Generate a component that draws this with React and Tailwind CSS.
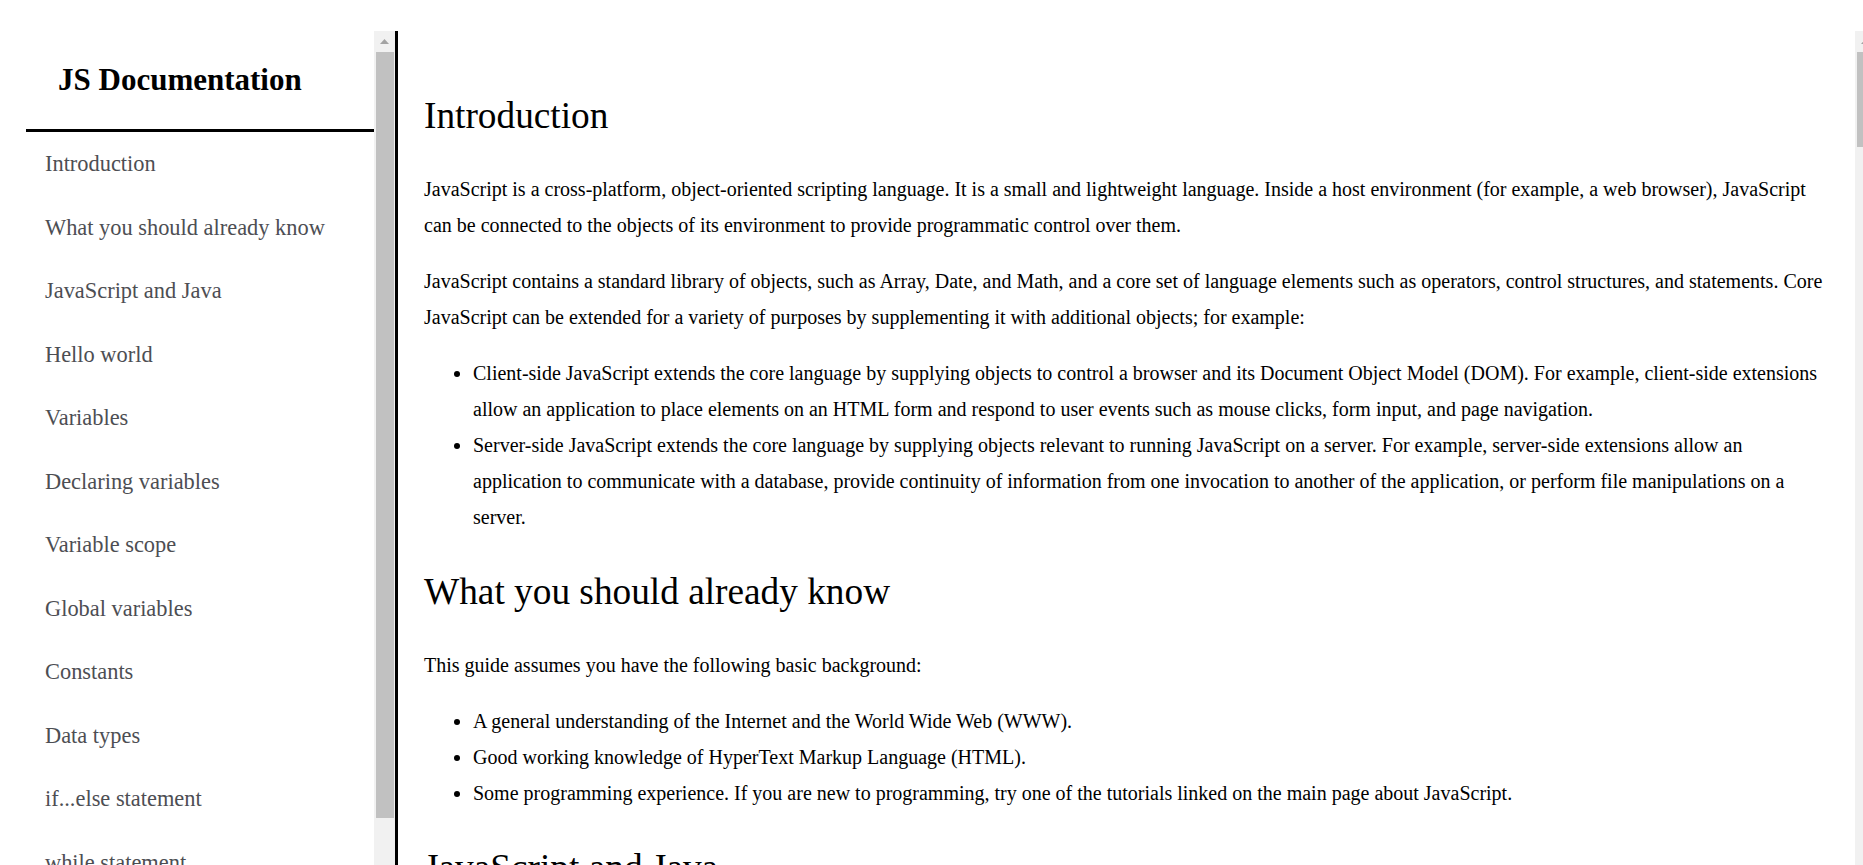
const navItems = [
  'Introduction',
  'What you should already know',
  'JavaScript and Java',
  'Hello world',
  'Variables',
  'Declaring variables',
  'Variable scope',
  'Global variables',
  'Constants',
  'Data types',
  'if...else statement',
  'while statement',
  'Function declarations',
  'Reference',
]

const sections = [
  {
    title: 'Introduction',
    paragraphs: [
      'JavaScript is a cross-platform, object-oriented scripting language. It is a small and lightweight language. Inside a host environment (for example, a web browser), JavaScript can be connected to the objects of its environment to provide programmatic control over them.',
      'JavaScript contains a standard library of objects, such as Array, Date, and Math, and a core set of language elements such as operators, control structures, and statements. Core JavaScript can be extended for a variety of purposes by supplementing it with additional objects; for example:',
    ],
    list: [
      'Client-side JavaScript extends the core language by supplying objects to control a browser and its Document Object Model (DOM). For example, client-side extensions allow an application to place elements on an HTML form and respond to user events such as mouse clicks, form input, and page navigation.',
      'Server-side JavaScript extends the core language by supplying objects relevant to running JavaScript on a server. For example, server-side extensions allow an application to communicate with a database, provide continuity of information from one invocation to another of the application, or perform file manipulations on a server.',
    ],
  },
  {
    title: 'What you should already know',
    paragraphs: ['This guide assumes you have the following basic background:'],
    list: [
      'A general understanding of the Internet and the World Wide Web (WWW).',
      'Good working knowledge of HyperText Markup Language (HTML).',
      'Some programming experience. If you are new to programming, try one of the tutorials linked on the main page about JavaScript.',
    ],
  },
  {
    title: 'JavaScript and Java',
    paragraphs: [
      'JavaScript and Java are similar in some ways but fundamentally different in some others. The JavaScript language resembles Java but does not have Java\'s static typing and strong type checking.',
    ],
    list: [],
  },
]

// fake classic scrollbar, the real one is hidden in the screenshot browser
function Scrollbar({ thumbHeight }) {
  return (
    <div className="w-[21px] shrink-0 h-full bg-[#f1f1f1] flex flex-col">
      <div className="h-[21px] flex items-center justify-center">
        <svg width="9" height="5" viewBox="0 0 9 5">
          <polygon points="4.5,0 9,5 0,5" fill="#a3a3a3" />
        </svg>
      </div>
      <div style={{ height: thumbHeight }} className="ml-[2px] mr-[1px] bg-[#c1c1c1]" />
    </div>
  )
}

export default function App() {
  return (
    <div className="w-full h-[865px] overflow-hidden bg-white text-black font-['Liberation_Serif','Times_New_Roman',serif]">
      <div className="h-[31px]" />
      <div className="flex w-[1876px] h-[834px]">
        <nav className="flex w-[398px] shrink-0 h-full border-r-[3px] border-black">
          <div className="w-[374px] h-full overflow-hidden">
            <header className="ml-[26px] h-[101px] border-b-[3px] border-black">
              <h1 className="pl-[32px] text-[31px] font-bold leading-[98px] whitespace-nowrap">JS Documentation</h1>
            </header>
            <ul>
              {navItems.map(item => (
                <li key={item}>
                  <a className="block pl-[45px] text-[22.4px] leading-[63.5px] text-[#4d4e53] whitespace-nowrap">
                    {item}
                  </a>
                </li>
              ))}
            </ul>
          </div>
          <Scrollbar thumbHeight={766} />
        </nav>

        <main className="flex-1 h-full overflow-hidden pt-[28px] px-[26px]">
          {sections.map(section => (
            <section key={section.title}>
              <h2 className="mt-[35px] mb-[33px] text-[37.3px] leading-[44px] font-normal">{section.title}</h2>
              {section.paragraphs.map((p, i) => (
                <p key={i} className="mb-[20px] text-[20px] leading-[36px]">{p}</p>
              ))}
              {section.list.length > 0 && (
                <ul className="mb-[20px] pl-[49px] list-disc text-[20px] leading-[36px]">
                  {section.list.map((li, i) => (
                    <li key={i}>{li}</li>
                  ))}
                </ul>
              )}
            </section>
          ))}
        </main>

        <Scrollbar thumbHeight={95} />
      </div>
    </div>
  )
}
